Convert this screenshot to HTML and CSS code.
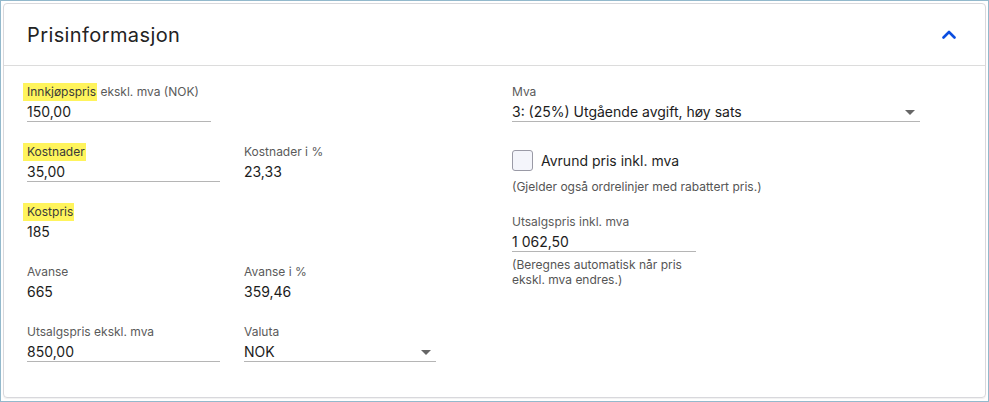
FILE: index.html
```html
<!DOCTYPE html>
<html lang="no">
<head>
<meta charset="utf-8">
<link rel="stylesheet" href="styles.css">
</head>
<body>
<div class="frame">
  <section class="card">
    <header class="card-head">
      <h2 class="title">Prisinformasjon</h2>
      <svg class="chevron" width="14" height="9" viewBox="0 0 14 9"><path d="M1.5 7.5 L7 2 L12.5 7.5" fill="none" stroke="#0b4ee0" stroke-width="2.6" stroke-linecap="round" stroke-linejoin="round"/></svg>
    </header>
    <div class="card-body">
      <div class="left">
        <div class="field f-narrow">
          <div class="label"><mark class="hl">Innkjøpspris</mark> ekskl. mva (NOK)</div>
          <div class="value input">150,00</div>
        </div>
        <div class="field"></div>

        <div class="field">
          <div class="label"><mark class="hl">Kostnader</mark></div>
          <div class="value input">35,00</div>
        </div>
        <div class="field">
          <div class="label">Kostnader i %</div>
          <div class="value">23,33</div>
        </div>

        <div class="field">
          <div class="label"><mark class="hl">Kostpris</mark></div>
          <div class="value">185</div>
        </div>
        <div class="field"></div>

        <div class="field">
          <div class="label">Avanse</div>
          <div class="value">665</div>
        </div>
        <div class="field">
          <div class="label">Avanse i %</div>
          <div class="value">359,46</div>
        </div>

        <div class="field">
          <div class="label">Utsalgspris ekskl. mva</div>
          <div class="value input">850,00</div>
        </div>
        <div class="field">
          <div class="label">Valuta</div>
          <div class="value input select">NOK<span class="caret"></span></div>
        </div>
      </div>

      <div class="right">
        <div class="field wide">
          <div class="label">Mva</div>
          <div class="value input select">3: (25%) Utgående avgift, høy sats<span class="caret"></span></div>
        </div>
        <label class="check">
          <span class="box"></span>
          <span class="check-text">Avrund pris inkl. mva</span>
        </label>
        <p class="note">(Gjelder også ordrelinjer med rabattert pris.)</p>
        <div class="field f-narrow inkl">
          <div class="label">Utsalgspris inkl. mva</div>
          <div class="value input">1 062,50</div>
          <p class="note note-2">(Beregnes automatisk når pris<br>ekskl. mva endres.)</p>
        </div>
      </div>
    </div>
  </section>
</div>
</body>
</html>
```

FILE: styles.css
```css
* { box-sizing: border-box; }
html, body { margin: 0; padding: 0; background: #fff; }
body {
  font-family: Inter, "Noto Sans", "Liberation Sans", sans-serif;
  color: #1f1f1f;
}
.frame {
  width: 989px;
  height: 402px;
  border: 1px solid #93b9cc;
  padding: 2px 2px 3px 2px;
}
.card {
  height: 100%;
  border: 1px solid #d8d8dc;
  border-radius: 4px;
  box-shadow: 0 1px 1px rgba(0,0,0,0.06);
  display: flex;
  flex-direction: column;
}
.card-head {
  height: 62px;
  flex: 0 0 62px;
  display: flex;
  align-items: center;
  justify-content: space-between;
  padding: 0 29px 0 23px;
  border-bottom: 1px solid #dcdcdc;
}
.title {
  margin: 0;
  font-size: 20px;
  font-weight: 400;
  color: #232323;
  letter-spacing: 0.4px;
}
.chevron { display: block; margin-top: 0; }

.card-body {
  display: flex;
  padding: 18px 0 0 23px;
}
.left {
  width: 412px;
  display: grid;
  grid-template-columns: 193px 192px;
  column-gap: 24px;
  grid-auto-rows: 60px;
}
.right {
  margin-left: 73px;
  width: 408px;
  display: flex;
  flex-direction: column;
}
.field { display: flex; flex-direction: column; }
.f-narrow { width: 184px; }
.label {
  font-size: 12px;
  line-height: 16px;
  height: 16px;
  color: #5a5a5a;
}
.hl {
  background: #fff45c;
  color: #3a3a3a;
  padding: 1px 1px 2px 4px;
  margin-left: -4px;
}
.value {
  font-size: 14px;
  line-height: 18px;
  padding-top: 3px;
  color: #1c1c1c;
}
.input {
  border-bottom: 1px solid #b5b5b5;
  padding-bottom: 0;
}
.select {
  display: flex;
  justify-content: space-between;
  align-items: center;
  padding-right: 5px;
}
.caret {
  width: 0; height: 0;
  border-left: 5px solid transparent;
  border-right: 5px solid transparent;
  border-top: 5px solid #666;
  margin-top: 1px;
}
.wide { width: 408px; }
.check {
  display: flex;
  align-items: center;
  margin-top: 27px;
  height: 22px;
}
.box {
  width: 21px;
  height: 21px;
  border: 1px solid #9a9aa6;
  border-radius: 3px;
  background: #f4f5fb;
}
.check-text {
  margin-left: 8px;
  font-size: 14px;
  color: #1f1f1f;
}
.note {
  margin: 0;
  font-size: 12px;
  line-height: 15px;
  color: #555;
}
.right > .note { margin-top: 8px; }
.inkl { margin-top: 20px; }
.note-2 { margin-top: 5px; }
```
